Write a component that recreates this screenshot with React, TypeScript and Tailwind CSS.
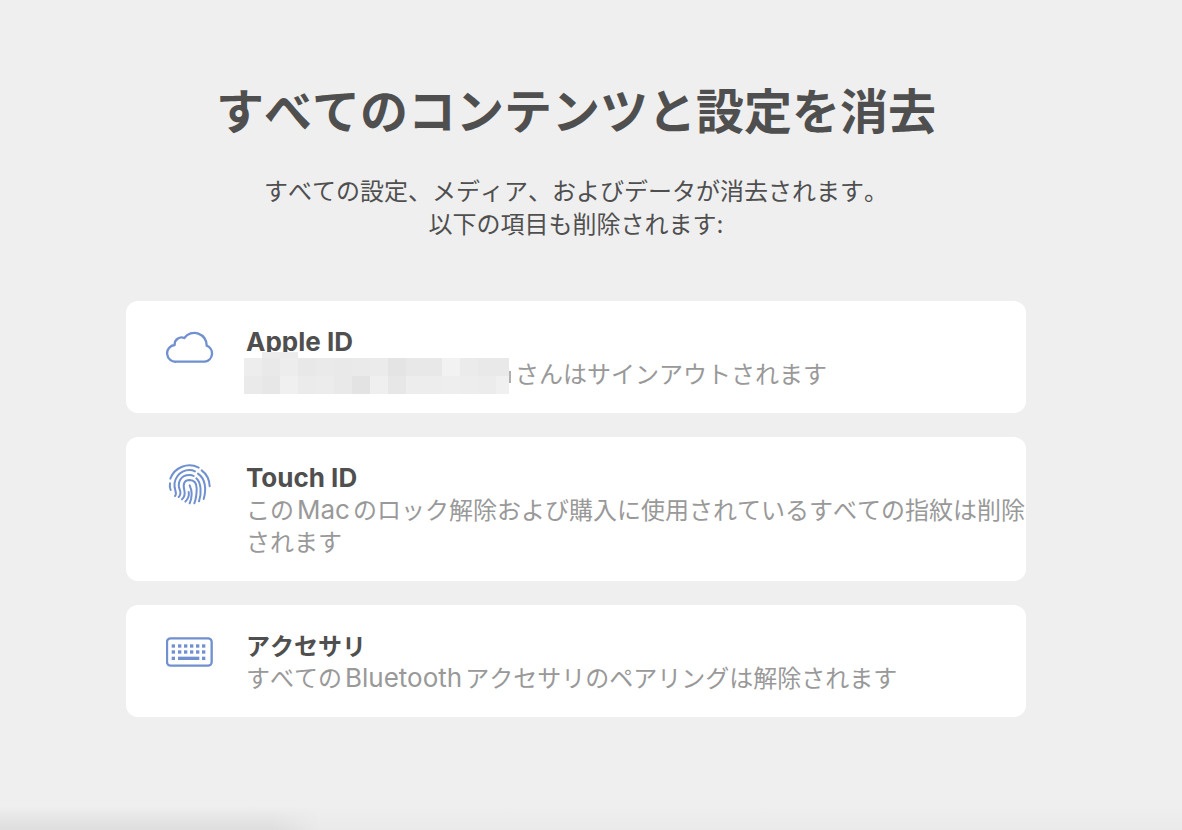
import type { ReactNode } from 'react'

function CloudIcon() {
  return (
    <svg className="h-12 w-12 shrink-0" viewBox="48 51 144 144" fill="none" stroke="#7090cf" strokeWidth={7} strokeLinejoin="round" aria-hidden="true">
      <path d="M79 155 A25 25 0 0 1 74 105 A21 21 0 0 1 103 84 A37 37 0 0 1 170 107 A25 25 0 0 1 165 155 Z" />
    </svg>
  )
}

function FingerprintIcon() {
  return (
    <svg className="h-12 w-12 shrink-0" viewBox="48 37 144 144" fill="none" stroke="#7090cf" strokeWidth={6} strokeLinecap="round" aria-hidden="true">
      <path d="M61 84 A61 61 0 0 1 146 51" />
      <path d="M155 59 Q178 76 179 107" />
      <path d="M60 98 Q58 108 62 118" />
      <path d="M75 136 Q80 131 76 119 C66 88 88 58 119 58 Q127 58 135 62" />
      <path d="M144 69 C166 84 170 115 161 145" />
      <path d="M86 139 Q94 131 90 119 C80 95 92 73 119 73 Q126 73 131 76" />
      <path d="M139 83 C154 96 155 130 147 152" />
      <path d="M96 146 Q107 136 103 119 C98 99 103 88 119 88 C134 89 140 99 140 113 Q140 141 133 158" />
      <path d="M106 153 Q119 140 116 124" />
      <path d="M119 104 Q131 130 119 158" />
    </svg>
  )
}

function KeyboardIcon() {
  return (
    <svg className="h-12 w-12 shrink-0" viewBox="48 33 144 144" fill="#7090cf" aria-hidden="true">
      <rect x="51" y="55" width="134" height="82" rx="11" fill="none" stroke="#7090cf" strokeWidth={7} />
      {[65, 84, 102, 120, 138, 156].map((x) => (
        <g key={x}>
          <rect x={x} y="73" width="10" height="10" />
          <rect x={x} y="91" width="10" height="10" />
        </g>
      ))}
      <rect x="65" y="110" width="10" height="10" />
      <rect x="84" y="110" width="64" height="10" />
      <rect x="156" y="110" width="10" height="10" />
    </svg>
  )
}

const mosaicRows = [
  ['#ededed', '#e9e9e9', '#ededed', '#e8e8e8', '#eaeaea', '#e9e9e9', '#eaeaea', '#ebebeb', '#e4e4e4', '#e8e8e8', '#e8e8e8', '#f2f2f2', '#ebebeb', '#e9e9e9', '#e9e9e9'],
  ['#eaeaea', '#e7e7e7', '#f0f0f0', '#ebebeb', '#ececec', '#e9e9e9', '#e3e3e3', '#efefef', '#e7e7e7', '#ededed', '#ededed', '#eeeeee', '#ededed', '#ececec', '#f0f0f0'],
]

/** Pixelated cover over the account name */
function MaskedName() {
  return (
    <svg className="absolute -top-[7px] -left-0.5 h-[42px] w-[268px]" viewBox="0 0 268 42" shapeRendering="crispEdges" aria-hidden="true">
      <rect x="18" y="0" width="36" height="6" fill="#ececec" />
      {mosaicRows.map((row, r) =>
        row.map((fill, c) => (
          <rect key={`${r}-${c}`} x={c * 18} y={6 + r * 18} width={c === 14 ? 13 : 18} height="18" fill={fill} />
        )),
      )}
      <rect x="265" y="19" width="2" height="12" fill="#b0b0b0" />
    </svg>
  )
}

/** Latin words run slightly larger than the kana around them */
function Latin({ children }: { children: ReactNode }) {
  return <span className="text-[26px] leading-none [font-kerning:normal]">{children}</span>
}

interface ItemProps {
  icon: ReactNode
  title: ReactNode
  children: ReactNode
}

function Item({ icon, title, children }: ItemProps) {
  return (
    <li className="flex gap-8 rounded-xl bg-white pt-[26px] pb-[22px] pl-10">
      {icon}
      <div className="min-w-0 flex-1 text-2xl">
        <h2 className="font-bold text-[#4f4f4f]">{title}</h2>
        <p className="relative text-[#999999] [&>span]:mx-[3px]">{children}</p>
      </div>
    </li>
  )
}

export default function App() {
  return (
    <div
      lang="ja"
      className="flex min-h-screen flex-col bg-[#efefef] font-['Inter','Noto_Sans_CJK_JP',sans-serif] text-[#4f4f4f] [font-kerning:none]"
    >
      <main className="flex flex-1 flex-col items-center pt-20 pr-[30px]">
        <h1 className="text-5xl leading-16 font-bold">すべてのコンテンツと設定を消去</h1>
        <p className="mt-[31px] text-center text-2xl leading-[33px]">
          すべての設定、メディア、およびデータが消去されます。
          <br />
          以下の項目も削除されます:
        </p>

        <ul className="mt-[60px] flex w-full max-w-[900px] flex-col gap-6">
          <Item icon={<CloudIcon />} title={<Latin>Apple ID</Latin>}>
            <MaskedName />
            <span className="pl-[266px]">さんはサインアウトされます</span>
          </Item>
          <Item icon={<FingerprintIcon />} title={<Latin>Touch ID</Latin>}>
            この<Latin>Mac</Latin>のロック解除および購入に使用されているすべての指紋は削除されます
          </Item>
          <Item icon={<KeyboardIcon />} title="アクセサリ">
            すべての<Latin>Bluetooth</Latin>アクセサリのペアリングは解除されます
          </Item>
        </ul>
      </main>

      {/* Shadow of the panel below, stronger at the left */}
      <div className="h-6 bg-linear-to-b from-[#efefef] to-[#eaeaea]">
        <div className="h-full w-[320px] bg-linear-to-b from-transparent to-black/5 mask-r-from-85%" />
      </div>
    </div>
  )
}
